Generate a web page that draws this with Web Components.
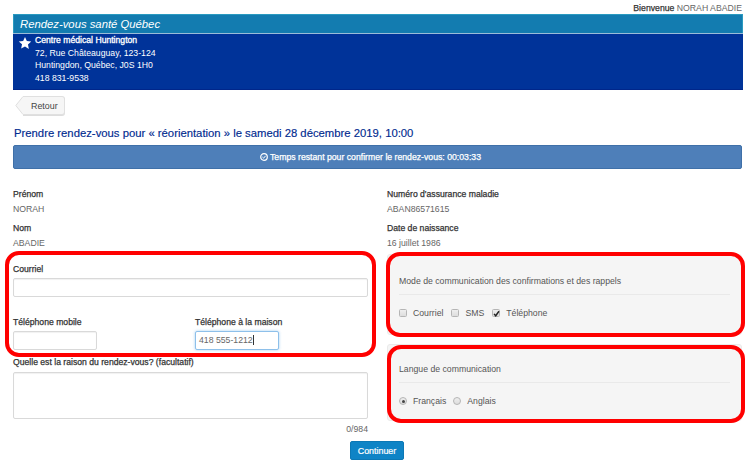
<!DOCTYPE html>
<html lang="fr"><head><meta charset="utf-8"><title>Rendez-vous santé Québec</title>
<style>
html,body{margin:0;padding:0;background:#fff}
body{width:752px;height:466px;overflow:hidden;font:8.7px/12px "Liberation Sans",Arial,sans-serif;color:#333}
</style></head><body>
<app-page></app-page>
<script>
function def(name, css, html){
  customElements.define(name, class extends HTMLElement{
    constructor(){super();const r=this.attachShadow({mode:'open'});r.innerHTML='<style>'+css+'</style>'+html;}
  });
}
const LAB='font-weight:normal;font-size:8.65px;line-height:12px;color:#333;-webkit-text-stroke:.25px #333;white-space:nowrap;';
def('site-banner',`
:host{display:block;margin:0 9px 0 13px;height:76px;box-sizing:border-box}
.t{height:19px;background:#137cb0;border:1px solid #2a9ac0;border-bottom:0;box-sizing:border-box;color:#fff;font:italic 11.3px/18px "Liberation Sans",sans-serif;padding-left:6px}
.s{height:1px;background:#9bbcd8}
.b{height:56px;background:#003399;border-bottom:1px solid #00268a;box-sizing:border-box;color:#fff;display:flex;padding:0 0 0 5px;gap:3px;line-height:12.5px;font-size:8.7px}
svg{width:14px;height:14px;margin-top:2px;flex:none}
b{display:block;font-weight:normal;-webkit-text-stroke:.3px #fff;font-size:8.65px}
`,`<div class="t">Rendez-vous santé Québec</div><div class="s"></div>
<div class="b"><svg viewBox="0 0 16 16"><path fill="#fff" d="M8 1.2l2.1 4.6 5 .6-3.7 3.4 1 5L8 11.9l-4.4 2.5 1-5L.9 6.4l5-.6z"/></svg>
<div><b>Centre médical Huntington</b>72, Rue Châteauguay, 123-124<br>Huntingdon, Québec, J0S 1H0<br>418 831-9538</div></div>`);
def('back-button',`
:host{display:inline-flex;align-items:center;height:19px;margin-left:23px;position:relative;box-sizing:border-box;width:42px;background:#f6f6f6;border:1px solid #e0e0e0;border-left:0;border-radius:0 3px 3px 0;box-shadow:0 1px 0 #ddd;color:#444;font-size:8.9px;padding-left:8px}
svg{position:absolute;left:-8px;top:-1px;width:8px;height:19px;overflow:visible}
`,`<svg viewBox="0 0 8 19"><path d="M8 0.5L0.8 9.5 8 18.5" fill="#f6f6f6" stroke="#e0e0e0"/></svg><slot></slot>`);
def('info-bar',`
:host{display:flex;align-items:center;justify-content:center;gap:2px;height:24px;box-sizing:border-box;margin:0 10px 0 13px;padding-right:14px;background:#4e7fb9;border:1px solid #3f70a8;border-radius:2px;color:#fff;font-size:8.7px;-webkit-text-stroke:.25px #fff}
svg{width:8px;height:8px}
`,`<svg viewBox="0 0 8 8"><circle cx="4" cy="4" r="3.3" fill="none" stroke="#fff" stroke-width="1.2"/><path d="M2.4 4l1.2 1.2 2-2.4" fill="none" stroke="#fff" stroke-width="1"/></svg><slot></slot>`);
def('data-field',`
:host{display:block;height:34px}
.l{${LAB}}
.v{color:#666;margin-top:3px;line-height:12px;font-size:8.7px}
`,`<div class="l"><slot name="l"></slot></div><div class="v"><slot></slot></div>`);
def('text-box',`
:host{display:block;box-sizing:border-box;height:var(--h,19px);width:var(--w,100%);background:#fff;border:1px solid #d9d9d9;border-radius:2px;box-shadow:inset 0 1px 1px rgba(0,0,0,.06);color:#666;font-size:8.7px;line-height:17px;padding-left:3px}
:host([focused]){border-color:#8ec0ea;box-shadow:0 0 3px rgba(102,175,233,.6)}
`,`<slot></slot>`);
def('red-mark',`
:host{position:absolute;inset:var(--i,0);border:4px solid #f00;border-radius:14px;pointer-events:none;box-sizing:border-box}
`,``);
def('choice-panel',`
:host{display:block;position:relative;box-sizing:border-box;margin-top:var(--mt,0);height:var(--ph,78px);background:#f5f5f5;border:1px solid #eaeaea;border-radius:3px;padding:var(--pt,20px) 11px 0 11px;color:#555;font-size:8.7px}
.h{height:19px;line-height:12px;border-bottom:1px solid #e9e9e9}
.o{display:flex;align-items:center;margin-top:12px;height:12px}
`,`<div class="h"><slot name="h"></slot></div><div class="o"><slot></slot></div>`);
def('choice-item',`
:host{display:inline-flex;align-items:center;margin-right:8px;color:#555;font-size:8.7px}
:host([radio]){margin-right:7px}
.c{width:8px;height:8px;box-sizing:border-box;margin-right:6px;background:linear-gradient(#eee,#ddd);border:1px solid #b5b5b5;border-radius:1.5px;display:flex;align-items:center;justify-content:center}
:host([radio]) .c{border-radius:50%}
:host([on][radio]) .c::after{content:"";width:3px;height:3px;border-radius:50%;background:#444}
svg{display:none;width:7px;height:7px;overflow:visible}
:host([on]:not([radio])) svg{display:block}
`,`<span class="c"><svg viewBox="0 0 8 8"><path d="M1.2 4.4l1.9 2.2 3.7-5.2" fill="none" stroke="#222" stroke-width="1.6"/></svg></span><slot></slot>`);
def('contact-group',`
:host{display:block;position:relative;height:87px}
.lab{${LAB}margin-bottom:3px}
.row{display:grid;grid-template-columns:182px 84px;margin-top:19px}
i{display:inline-block;width:1px;height:10px;background:#333;vertical-align:-2px}
`,`<div class="lab">Courriel</div><text-box></text-box>
<div class="row"><div><div class="lab">Téléphone mobile</div><text-box style="--w:84px"></text-box></div>
<div><div class="lab">Téléphone à la maison</div><text-box focused style="--w:84px">418 555-1212<i></i></text-box></div></div>
<red-mark style="--i:-12px -8px -7px -8px"></red-mark>`);
def('reason-field',`
:host{display:block}
.lab{${LAB}margin-bottom:4px}
.n{text-align:right;color:#666;font-size:8.7px;line-height:12px;margin-top:4px}
`,`<div class="lab">Quelle est la raison du rendez-vous? (facultatif)</div><text-box style="--h:47px"></text-box><div class="n">0/984</div>`);
def('blue-button',`
:host{display:flex;align-items:center;justify-content:center;width:54px;height:19px;box-sizing:border-box;background:#0f84c6;border:1px solid #0c78b5;border-radius:2px;color:#fff;font-size:8.9px;-webkit-text-stroke:.2px #fff}
`,`<slot></slot>`);
def('app-page',`
:host{display:block;position:relative;width:752px;height:466px}
.w{height:14px;text-align:right;padding-right:10px;font-size:8.7px;line-height:16px;color:#333;box-sizing:border-box}
.w b{font-weight:normal;-webkit-text-stroke:.25px #333}.w span{color:#666}
h1{margin:11px 0 5px 14px;font:normal 11.3px/14px "Liberation Sans",sans-serif;color:#002a8f;height:14px;-webkit-text-stroke:.15px #002a8f}
.back{margin-top:6px;height:19px}
.cols{display:grid;grid-template-columns:355px 355px;column-gap:19px;margin:19px 0 0 13px}
.btnrow{display:flex;padding-left:350px;margin-top:6px}
`,`<div class="w"><b>Bienvenue</b> <span>NORAH ABADIE</span></div>
<site-banner></site-banner>
<div class="back"><back-button>Retour</back-button></div>
<h1>Prendre rendez-vous pour « réorientation » le samedi 28 décembre 2019, 10:00</h1>
<info-bar>Temps restant pour confirmer le rendez-vous: 00:03:33</info-bar>
<div class="cols">
<div>
<data-field><span slot="l">Prénom</span>NORAH</data-field>
<data-field><span slot="l">Nom</span>ABADIE</data-field>
<div style="height:7px"></div>
<contact-group></contact-group>
<div style="height:6px"></div>
<reason-field></reason-field>
</div>
<div>
<data-field><span slot="l">Numéro d'assurance maladie</span>ABAN86571615</data-field>
<data-field><span slot="l">Date de naissance</span>16 juillet 1986</data-field>
<choice-panel style="--mt:-2px;--ph:81px"><span slot="h">Mode de communication des confirmations et des rappels</span>
<choice-item>Courriel</choice-item><choice-item>SMS</choice-item><choice-item on>Téléphone</choice-item>
<red-mark style="--i:-3px -4px -3px -2px"></red-mark></choice-panel>
<choice-panel style="--mt:9px;--ph:77px;--pt:18px"><span slot="h">Langue de communication</span>
<choice-item radio on>Français</choice-item><choice-item radio>Anglais</choice-item>
<red-mark style="--i:0 -4px -3px -1px"></red-mark></choice-panel>
</div>
</div>
<div class="btnrow"><blue-button>Continuer</blue-button></div>`);
</script>
</body></html>
